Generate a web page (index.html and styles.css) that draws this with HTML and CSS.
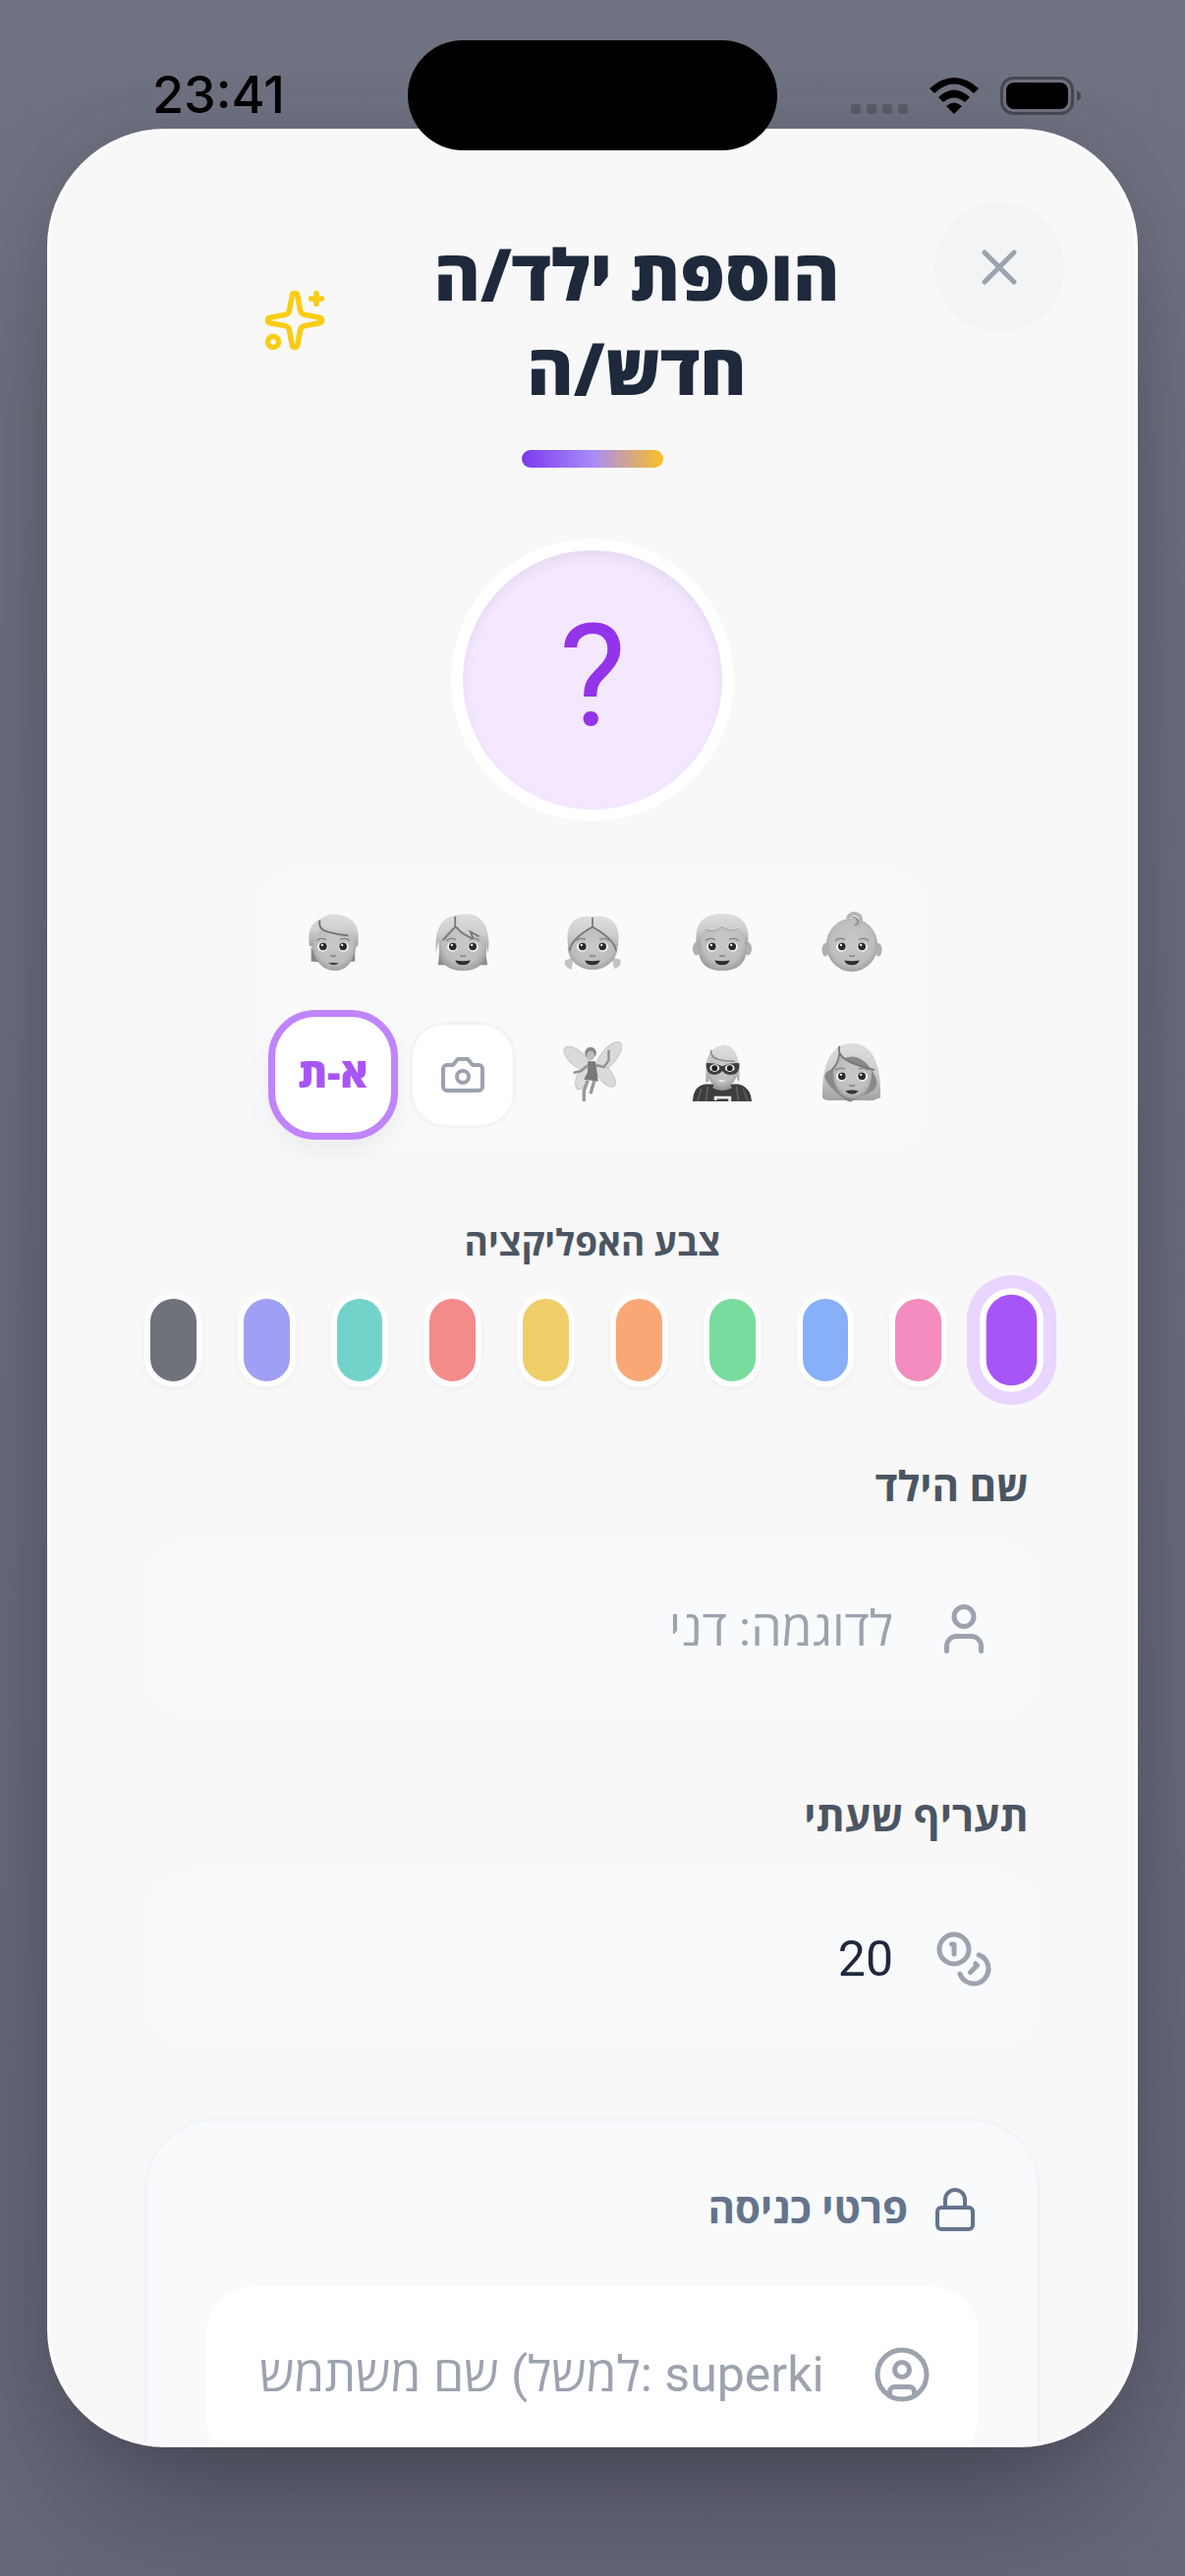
FILE: index.html
```
<!DOCTYPE html>
<html lang="he" dir="rtl">
<head>
    <meta charset="UTF-8">
    <meta name="viewport" content="width=device-width, initial-scale=1">
    <title>הוספת ילד/ה</title>
    <link rel="stylesheet" href="styles.css">
</head>
<body>
    <svg class="defs" aria-hidden="true">
        <defs>
            <radialGradient id="skin" cx=".5" cy=".45" r=".6">
                <stop offset="0" stop-color="#c9c9c9"/>
                <stop offset=".7" stop-color="#bdbdbd"/>
                <stop offset="1" stop-color="#969696"/>
            </radialGradient>
            <linearGradient id="hair" x1="0" y1="0" x2="0" y2="1">
                <stop offset="0" stop-color="#dedede"/>
                <stop offset=".5" stop-color="#cecece"/>
                <stop offset="1" stop-color="#a2a2a2"/>
            </linearGradient>
            <!-- shared by all the faces -->
            <g id="eyes">
                <ellipse cx="21" cy="37" rx="5.500" ry="5" fill="#f6f6f6"/>
                <ellipse cx="43" cy="37" rx="5.500" ry="5" fill="#f6f6f6"/>
                <circle cx="21.5" cy="36.5" r="4" fill="#2b2b2b"/>
                <circle cx="42.5" cy="36.5" r="4" fill="#2b2b2b"/>
                <circle cx="20.5" cy="35" r="1.2" fill="#fff"/>
                <circle cx="41.5" cy="35" r="1.2" fill="#fff"/>
                <path d="M15 30q4-3 9-1M40 29q5-2 9 1" fill="none" stroke="#8a8a8a" stroke-width="1.6" stroke-linecap="round"/>
                <path d="M29.5 46q2.500 2 5 0" fill="none" stroke="#858585" stroke-width="1.6" stroke-linecap="round"/>
            </g>
            <path id="smile" d="M24 51q8 1.500 16 0q-2 5-8 5t-8-5z" fill="#2e2e2e"/>
        </defs>
    </svg>

    <div class="status">
        <span class="time" dir="ltr">23:41</span>
        <span class="island"></span>
        <div class="signals" dir="ltr">
            <svg width="58" height="39" viewBox="0 0 58 39" fill="#555965"><rect y="28" width="10" height="10" rx="3"/><rect x="16" y="28" width="10" height="10" rx="3"/><rect x="32" y="28" width="10" height="10" rx="3"/><rect x="48" y="28" width="10" height="10" rx="3"/></svg>
            <svg width="50" height="39" viewBox="0 0 50 39"><path d="M0 12Q25-10 50 12L45 17Q25-2 5 17z"/><path d="M9 21Q25 6 41 21L36 26Q25 17 14 26z"/><path d="M17 30Q25 23 33 30L25 38z"/></svg>
            <svg width="83" height="39" viewBox="0 0 83 39"><rect x="1.500" y="1.500" width="72" height="36" rx="12" fill="none" stroke="#44474f" stroke-width="3"/><rect x="6" y="6" width="63" height="27" rx="8"/><path d="M78 14q4 2 4 5.500t-4 5.500z" fill="#44474f"/></svg>
        </div>
    </div>

    <div class="modal">
        <button class="close" type="button" aria-label="סגירה">
            <svg class="icon" viewBox="0 0 24 24"><path d="M18 6 6 18M6 6l12 12"/></svg>
        </button>

        <div class="header">
            <div class="title-row">
                <h1>הוספת ילד/ה חדש/ה</h1>
                <svg class="icon sparkles" viewBox="0 0 24 24"><path d="M11.017 2.814a1 1 0 0 1 1.966 0l1.051 5.558a2 2 0 0 0 1.594 1.594l5.558 1.051a1 1 0 0 1 0 1.966l-5.558 1.051a2 2 0 0 0-1.594 1.594l-1.051 5.558a1 1 0 0 1-1.966 0l-1.051-5.558a2 2 0 0 0-1.594-1.594l-5.558-1.051a1 1 0 0 1 0-1.966l5.558-1.051a2 2 0 0 0 1.594-1.594z"/><path d="M20 2v4M22 4h-4"/><circle cx="4" cy="20" r="2"/></svg>
            </div>
            <div class="bar"></div>
        </div>

        <div class="avatar">?</div>

        <div class="picker">
            <button type="button" aria-label="תינוק">
                <svg viewBox="0 0 64 64"><ellipse cx="4" cy="40" rx="3.500" ry="7" fill="#b0b0b0"/><ellipse cx="60" cy="40" rx="3.500" ry="7" fill="#b0b0b0"/><ellipse cx="32" cy="35" rx="27" ry="28" fill="url(#skin)"/><use href="#eyes"/><use href="#smile"/><path d="M28 6q4-6 10-3t1 11" fill="none" stroke="#b5b5b5" stroke-width="4" stroke-linecap="round"/><path d="M32 6q5-1 6 3t-3 5" fill="none" stroke="#868686" stroke-width="1.500"/></svg>
            </button>
            <button type="button" aria-label="ילד">
                <svg viewBox="0 0 64 64"><ellipse cx="5" cy="39" rx="4" ry="7" fill="#b0b0b0"/><ellipse cx="59" cy="39" rx="4" ry="7" fill="#b0b0b0"/><path d="M7 26q0-21 25-21t26 21v12q-1 24-26 24T7 38z" fill="url(#skin)"/><path d="M5 34Q1 2 32 2t27 32l-3 1q0-12-5-16-8 5-18-3-8 7-17 2-7 6-7 17z" fill="url(#hair)"/><path d="M14 19q9 4 18-3 8 6 17 2" fill="none" stroke="#a0a0a0" stroke-width="1"/><use href="#eyes"/><use href="#smile"/></svg>
            </button>
            <button type="button" aria-label="ילדה">
                <svg viewBox="0 0 64 64"><path d="M12 48 3 51q-2 7 7 10zM52 48l9 2q3 7-6 10z" fill="#c3c3c3"/><ellipse cx="32" cy="38" rx="26" ry="23" fill="url(#skin)"/><path d="M8 44Q-1 8 24 5q5-1 8 1 4-2 10-1 24 4 15 39-1-15-25-28Q9 29 8 44z" fill="url(#hair)"/><path d="M32 6v10Q10 28 8 41M32 16q22 12 25 25" fill="none" stroke="#777" stroke-width="1.800"/><use href="#eyes"/><use href="#smile"/></svg>
            </button>
            <button type="button" aria-label="ילד גדול">
                <svg viewBox="0 0 64 64"><path d="M8 38 6 56h11zM55 38l3 18H47z" fill="#8d8d8d"/><path d="M7 28q0-22 25-22t25 22v10q0 24-25 24T7 38z" fill="url(#skin)"/><path d="M4 43Q1 8 23 4q33-8 36 24 1 10-1 15-1-15-9-19-2 2-5-2l1 4q-9-1-20-11-10 4-15 13-5 4-6 15z" fill="url(#hair)"/><path d="M24 5v11l-13 14M25 16q7 9 18 12l-3-7 9 5" fill="none" stroke="#747474" stroke-width="1.800"/><use href="#eyes"/><use href="#smile"/></svg>
            </button>
            <button type="button" aria-label="נער">
                <svg viewBox="0 0 64 64"><path d="M9 36 9 52l8 1zM55 36v16l-8 1z" fill="#888"/><path d="M10 27q0-21 23-21t23 21v11q-5 24-22 24-18 0-24-24z" fill="url(#skin)"/><path d="M7 36Q4 13 18 8 28 0 42 4q20 5 16 32l-3 1q1-10-7-11-19-1-28-8-8 5-9 18z" fill="url(#hair)"/><path d="M18 9q-2 9 8 12t22 4" fill="none" stroke="#777" stroke-width="2"/><use href="#eyes"/><path d="M27 54q5-1 11 0-5 4-11 0z" fill="#444"/></svg>
            </button>
            <button type="button" aria-label="אישה">
                <svg viewBox="0 0 64 64"><path d="M1 59Q0 3 32 2q31 0 30 57-8 4-16 3H12Q2 62 1 59z" fill="url(#hair)"/><path d="M10 30q10-14 22-14t22 16-4 22-18 9-20-13-2-20z" fill="#898989"/><path d="M12 28q7-8 9-14 14 13 32 16 0 29-21 30Q12 57 12 28z" fill="url(#skin)"/><path d="M19 5q-3 9 8 15t29 10M19 12Q18 24 10 31" fill="none" stroke="#777" stroke-width="1.800"/><use href="#eyes"/><path d="M25 52q7-2 14 0-7 7-14 0z" fill="#333"/></svg>
            </button>
            <button type="button" aria-label="גיבור על">
                <svg viewBox="0 0 64 64"><path d="M1 63q1-17 14-18h34q13 3 14 18z" fill="#3d3d3d"/><path d="M10 50 6 63M54 50l5 13M17 47l-2 16M47 47l2 16" stroke="#5b5b5b" stroke-width="2"/><path d="M24 42h16l2 7q-10 5-20 0z" fill="#999"/><ellipse cx="32" cy="27" rx="17" ry="22" fill="url(#skin)"/><path d="M15 43q-2-35 17-39 20-1 18 38-4-1-3-19-16 0-24-9-8 5-5 28z" fill="url(#hair)"/><path d="M20 9q0 8 8 10t17 2" fill="none" stroke="#858585" stroke-width="1.500"/><path d="M15 23q8-1 17 3 9-4 18-3 1 12-9 12-6 0-9-4-3 4-9 4-8 0-8-12z" fill="#404040"/><ellipse cx="24" cy="28" rx="5" ry="4" fill="#eee"/><ellipse cx="40" cy="28" rx="5" ry="4" fill="#eee"/><circle cx="24" cy="28" r="3" fill="#222"/><circle cx="40" cy="28" r="3" fill="#222"/><path d="M27 40q5 2 9 0-4 5-9 0z" fill="#fff"/><path d="M25 62v-3h15v4" fill="none" stroke="#eee" stroke-width="3"/></svg>
            </button>
            <button type="button" aria-label="פיה">
                <svg viewBox="0 0 64 64"><g fill="#dadada" stroke="#c6c6c6" stroke-width="1"><ellipse cx="16" cy="18" rx="17" ry="8" transform="rotate(40 16 18)"/><ellipse cx="49" cy="16" rx="19" ry="8" transform="rotate(-50 49 16)"/><ellipse cx="46" cy="36" rx="14" ry="7" transform="rotate(52 46 36)"/><ellipse cx="21" cy="39" rx="6" ry="12" transform="rotate(20 21 39)"/></g><circle cx="30" cy="12" r="6" fill="#888"/><ellipse cx="30" cy="15" rx="4" ry="5" fill="#bdbdbd"/><path d="M27 21h8l2 13 1 8-15-2 4-8z" fill="#797979"/><path d="M27 25 20 31l-8 2M36 25l8 2 5-7V9" fill="none" stroke="#929292" stroke-width="2.500"/><path d="m27 41-4 11v11M34 41l-3 10-1 4" fill="none" stroke="#999" stroke-width="3.500"/></svg>
            </button>
            <button class="camera" type="button" aria-label="מצלמה">
                <svg class="icon" viewBox="0 0 24 24"><path d="M14.500 4h-5L7 7H4a2 2 0 0 0-2 2v9a2 2 0 0 0 2 2h16a2 2 0 0 0 2-2V9a2 2 0 0 0-2-2h-3z"/><circle cx="12" cy="13" r="3"/></svg>
            </button>
            <button class="letters on" type="button">א-ת</button>
        </div>

        <fieldset class="colors">
            <legend>צבע האפליקציה</legend>
            <div class="swatches">
                <input class="purple" type="radio" name="color" aria-label="סגול" checked>
                <input class="pink" type="radio" name="color" aria-label="ורוד">
                <input class="blue" type="radio" name="color" aria-label="כחול">
                <input class="green" type="radio" name="color" aria-label="ירוק">
                <input class="orange" type="radio" name="color" aria-label="כתום">
                <input class="yellow" type="radio" name="color" aria-label="צהוב">
                <input class="red" type="radio" name="color" aria-label="אדום">
                <input class="teal" type="radio" name="color" aria-label="טורקיז">
                <input class="indigo" type="radio" name="color" aria-label="אינדיגו">
                <input class="gray" type="radio" name="color" aria-label="אפור">
            </div>
        </fieldset>

        <div class="field">
            <label for="name">שם הילד</label>
            <div class="box">
                <svg class="icon" viewBox="0 0 24 24"><path d="M19 21v-2a4 4 0 0 0-4-4H9a4 4 0 0 0-4 4v2"/><circle cx="12" cy="7" r="4"/></svg>
                <input id="name" type="text" placeholder="לדוגמה: דני">
            </div>
        </div>

        <div class="field">
            <label for="rate">תעריף שעתי</label>
            <div class="box">
                <svg class="icon" viewBox="0 0 24 24"><circle cx="8" cy="8" r="6"/><path d="M18.090 10.370A6 6 0 1 1 10.340 18M7 6h1v4M16.710 13.880l.7.710-2.820 2.820"/></svg>
                <input id="rate" type="text" inputmode="numeric" value="20">
            </div>
        </div>

        <div class="login">
            <h2>
                <svg class="icon" viewBox="0 0 24 24"><rect x="3" y="11" width="18" height="11" rx="2"/><path d="M7 11V7a5 5 0 0 1 10 0v4"/></svg>
                פרטי כניסה
            </h2>
            <div class="box">
                <svg class="icon" viewBox="0 0 24 24"><circle cx="12" cy="12" r="10"/><circle cx="12" cy="10" r="3"/><path d="M7 20.660V19a2 2 0 0 1 2-2h6a2 2 0 0 1 2 2v1.660"/></svg>
                <input type="text" dir="ltr" aria-label="שם משתמש" placeholder="שם משתמש &lrm;(&lrm;למשל: superki">
            </div>
        </div>
    </div>
</body>
</html>
```
FILE: styles.css
```
*{box-sizing:border-box;}
body,h1,h2,fieldset,legend{margin:0;padding:0;}
body{
    height:100vh;
    display:flex;
    align-items:center;
    justify-content:center;
    padding:0 48px;
    overflow:hidden;
    background:linear-gradient(#6f7280, #6b6d7e 45%, #66677a);
    font-family:Roboto, "Open Sans", sans-serif;
    color:#1e293b;
}
button,input{
    font-family:inherit;
    border:none;
    outline:none;
}
button{
    padding:0;
    cursor:pointer;
}
.defs{
    position:absolute;
    width:0;
    height:0;
}
.icon{
    flex:none;
    width:60px;
    height:60px;
    fill:none;
    stroke:currentColor;
    stroke-width:2;
    stroke-linecap:round;
    stroke-linejoin:round;
}

/* status bar */
.status{
    position:absolute;
    top:0;
    left:0;
    z-index:2;
    width:100%;
    height:153px;
    padding:41px 105px 0 155px;
    display:flex;
    direction:ltr;
    align-items:center;
    justify-content:space-between;
    color:#000;
}
.time{
    font:500 52px/60px Inter, sans-serif;
}
.island{
    position:absolute;
    top:41px;
    left:50%;
    width:376px;
    height:112px;
    margin-left:-188px;
    border-radius:56px;
    background:#000;
}
.signals{
    display:flex;
    gap:22px;
}

/* modal */
.modal{
    position:relative;
    width:100%;
    height:90vh;
    padding:96px 96px 0;
    overflow:hidden;
    border:3px solid #fdfdfd;
    border-radius:120px;
    background:#f8f8f8;
    box-shadow:0 75px 150px -36px rgba(0,0,0,.35), 0 0 60px rgba(0,0,0,.08);
}
.close{
    position:absolute;
    top:72px;
    right:72px;
    width:132px;
    height:132px;
    display:flex;
    align-items:center;
    justify-content:center;
    border-radius:50%;
    background:#f3f4f6;
    color:#9ca3af;
}
.header{
    display:flex;
    flex-direction:column;
    align-items:center;
    gap:36px;
}
.title-row{
    width:100%;
    max-width:672px;
    display:flex;
    align-items:center;
    gap:24px;
}
h1{
    flex:1;
    text-align:center;
    font:800 72px/96px "Open Sans", sans-serif;
}
.sparkles{
    width:66px;
    height:66px;
    color:#facc15;
}
.bar{
    width:144px;
    height:18px;
    border-radius:9px;
    background:linear-gradient(to right, #7c3aed, #a78bfa, #fbbf24);
}
.avatar{
    width:288px;
    height:288px;
    margin:72px auto 48px;
    border:12px solid #fff;
    border-radius:50%;
    background:#f3e8ff;
    box-shadow:inset 0 6px 12px rgba(0,0,0,.06);
    color:#9333ea;
    font-size:144px;
    line-height:258px;
    text-align:center;
}

.picker{
    width:fit-content;
    margin:0 auto;
    padding:18px;
    display:grid;
    grid-template-columns:repeat(5, 120px);
    grid-auto-rows:120px;
    gap:12px;
    border-radius:48px;
    background:#f9fafc;
}
.picker button{
    padding-bottom:6px;
    display:flex;
    align-items:center;
    justify-content:center;
    border-radius:48px;
    background:none;
}
.picker button svg{
    width:62px;
    height:62px;
}
.picker .camera{
    margin:6px;
    padding:0;
    border:3px solid #f3f4f6;
    border-radius:36px;
    background:#fff;
    color:#9ca3af;
}
.picker .camera svg{
    width:48px;
    height:48px;
}
.picker .on{
    margin:-6px;
    border:7px solid #c084fc;
    border-radius:48px;
    background:#fff;
    box-shadow:0 12px 24px rgba(0,0,0,.06);
    color:#a855f7;
}
.letters{
    font:800 42px/48px "Open Sans", sans-serif;
}

.colors{
    min-width:0;
    margin:70px 0 72px;
    border:none;
}
legend{
    width:100%;
    margin-bottom:26px;
    text-align:center;
    font-size:37px;
    font-weight:700;
    line-height:48px;
    color:#4b5563;
}
.swatches{
    display:flex;
    gap:36px;
}
.swatches input{
    appearance:none;
    flex:1;
    min-width:0;
    height:96px;
    margin:0;
    border:6px solid #fdfdfd;
    border-radius:30px;
    box-shadow:0 3px 6px rgba(0,0,0,.04);
}
.swatches input:checked{
    border-color:#fff;
    box-shadow:0 0 0 12px #e9d5ff;
    transform:scale(1.1);
}
.purple{background:#a855f7;}
.pink{background:#f48cbf;}
.blue{background:#87b0f8;}
.green{background:#79dc9e;}
.orange{background:#f9a875;}
.yellow{background:#efce6a;}
.red{background:#f38b8b;}
.teal{background:#72d3ca;}
.indigo{background:#9f9ff3;}
.gray{background:#6d727b;}

/* form */
.field{
    margin-bottom:72px;
}
.field label{
    display:block;
    margin-bottom:24px;
    padding:0 12px;
    font-size:42px;
    font-weight:700;
    line-height:60px;
    color:#4b5563;
}
.box{
    height:180px;
    padding:0 48px;
    display:flex;
    align-items:center;
    gap:42px;
    border-radius:48px;
    background:#f9fafc;
    color:#9ca3af;
}
.box input{
    flex:1;
    min-width:0;
    height:72px;
    padding:0;
    background:none;
    font-size:50px;
    color:#1e293b;
}
.box input::placeholder{
    color:#9ca3af;
    opacity:1;
}
.login{
    padding:60px;
    border:3px solid #f1f5f9;
    border-radius:72px;
    background:#f8fafc;
}
.login h2{
    margin-bottom:48px;
    display:flex;
    align-items:center;
    gap:24px;
    font-size:42px;
    font-weight:700;
    line-height:60px;
    color:#64748b;
}
.login h2 .icon{
    width:48px;
    height:48px;
}
.login .box{
    padding-left:54px;
    background:#fff;
}
```
